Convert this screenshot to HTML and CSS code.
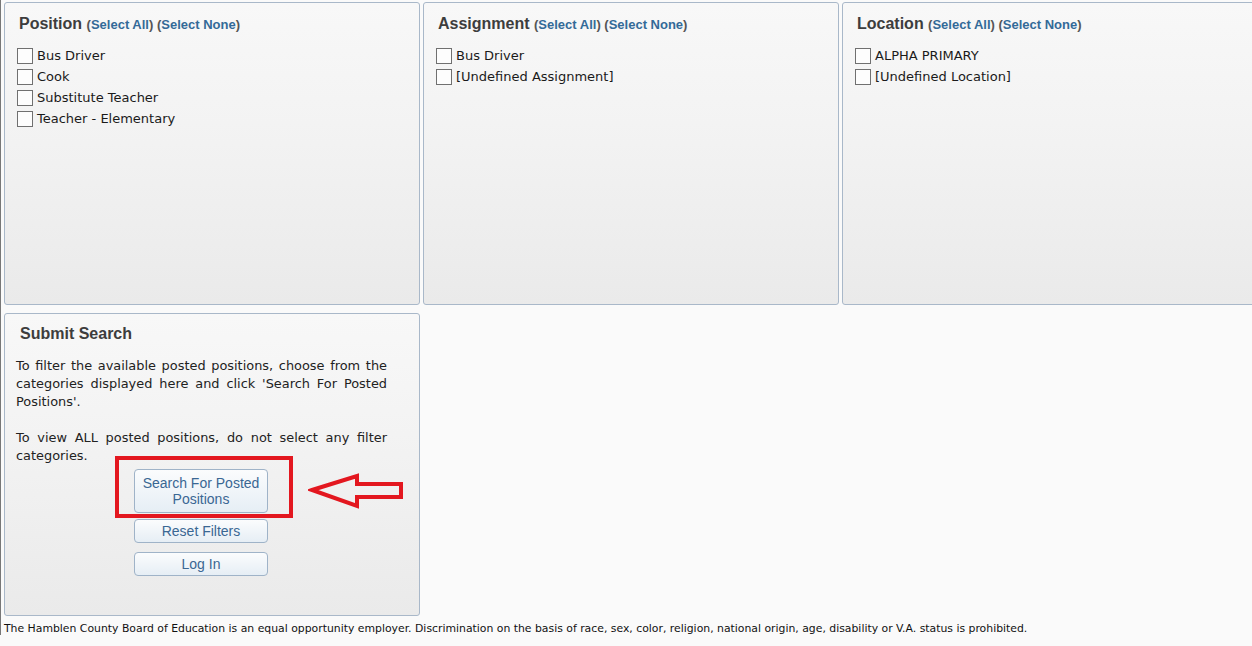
FILE: index.html
```html
<!DOCTYPE html>
<html lang="en">
<head>
  <meta charset="UTF-8">
  <title>Posted Positions</title>
  <link rel="stylesheet" href="styles.css">
</head>
<body>

  <div class="filtri">
    <div class="pannello">
      <div class="titolo">Position <span class="link">(<a href="#">Select All</a>) (<a href="#">Select None</a>)</span></div>
      <label class="voce"><span class="casella"></span>Bus Driver</label>
      <label class="voce"><span class="casella"></span>Cook</label>
      <label class="voce"><span class="casella"></span>Substitute Teacher</label>
      <label class="voce"><span class="casella"></span>Teacher - Elementary</label>
    </div>
    <div class="pannello">
      <div class="titolo">Assignment <span class="link">(<a href="#">Select All</a>) (<a href="#">Select None</a>)</span></div>
      <label class="voce"><span class="casella"></span>Bus Driver</label>
      <label class="voce"><span class="casella"></span>[Undefined Assignment]</label>
    </div>
    <div class="pannello">
      <div class="titolo">Location <span class="link">(<a href="#">Select All</a>) (<a href="#">Select None</a>)</span></div>
      <label class="voce"><span class="casella"></span>ALPHA PRIMARY</label>
      <label class="voce"><span class="casella"></span>[Undefined Location]</label>
    </div>
  </div>

  <div class="pannello invio">
    <div class="titolo titolo-invio">Submit Search</div>
    <p>To filter the available posted positions, choose from the categories displayed here and click 'Search For Posted Positions'.</p>
    <p>To view ALL posted positions, do not select any filter categories.</p>
    <div class="pulsanti">
      <div class="evidenzia">
        <button class="btn btn-alto">Search For Posted<br>Positions</button>
      </div>
      <button class="btn">Reset Filters</button>
      <button class="btn">Log In</button>
    </div>
    <svg class="freccia" width="98" height="38" viewBox="0 0 98 38">
      <polygon points="4,17 49,3 49,11 93,11 93,24 49,24 49,33" fill="none" stroke="#e3171f" stroke-width="4" stroke-linejoin="miter"/>
    </svg>
  </div>

  <div class="nota">The Hamblen County Board of Education is an equal opportunity employer. Discrimination on the basis of race, sex, color, religion, national origin, age, disability or V.A. status is prohibited.</div>

</body>
</html>
```

FILE: styles.css
```css
html, body {
  overflow: hidden;
}
body {
  margin: 0;
  padding: 2px 0 0 3px;
  background: #fafafa;
  border-left: 1px solid #777;
  font-family: "DejaVu Sans", sans-serif;
  font-size: 13px;
  color: #222;
  width: 1300px;
}
.filtri {
  display: grid;
  grid-template-columns: 416px 416px 417px;
  gap: 3px;
}
.pannello {
  box-sizing: border-box;
  height: 303px;
  border: 1px solid #a9b8c9;
  border-radius: 3px;
  background: linear-gradient(#f8f8f8, #f3f3f3 40%, #eaeaea);
  padding: 12px 12px 0 12px;
}
.titolo {
  font-family: "Liberation Sans", Arial, sans-serif;
  font-weight: bold;
  font-size: 16px;
  color: #3d3d3d;
  margin: 0 0 12px 2px;
  height: 18px;
}
.link {
  font-size: 13px;
  color: #555;
}
.link a {
  color: #336a98;
  text-decoration: none;
}
.voce {
  display: flex;
  align-items: center;
  height: 21px;
  line-height: 21px;
  color: #1a1a1a;
}
.casella {
  box-sizing: border-box;
  width: 16px;
  height: 16px;
  border: 1px solid #707070;
  background: #fdfdfd;
  margin-right: 4px;
}
.invio {
  position: relative;
  width: 416px;
  margin-top: 8px;
  padding: 11px 32px 0 11px;
}
.titolo-invio {
  margin: 0 0 14px 4px;
}
.invio p {
  margin: 0 0 18px 0;
  text-align: justify;
  line-height: 18px;
  font-size: 12.9px;
}
.pulsanti {
  display: flex;
  flex-direction: column;
  align-items: flex-start;
  margin-top: -27px;
  padding-left: 118px;
  gap: 9px;
}
.evidenzia {
  border: 4px solid #e3171f;
  padding: 9px 21px 1px 15px;
  margin-left: -19px;
  margin-bottom: -8px;
}
.btn {
  box-sizing: border-box;
  width: 134px;
  height: 24px;
  border: 1px solid #9fb3c8;
  border-radius: 4px;
  background: linear-gradient(#fbfcfd, #e6eef5);
  font-family: "Liberation Sans", Arial, sans-serif;
  font-size: 14px;
  line-height: 16px;
  color: #3a6793;
  padding: 0;
}
.btn-alto {
  height: 44px;
}
.freccia {
  position: absolute;
  left: 303px;
  top: 159px;
}
.nota {
  margin-top: 6px;
  font-size: 10.85px;
  color: #111;
}
```
